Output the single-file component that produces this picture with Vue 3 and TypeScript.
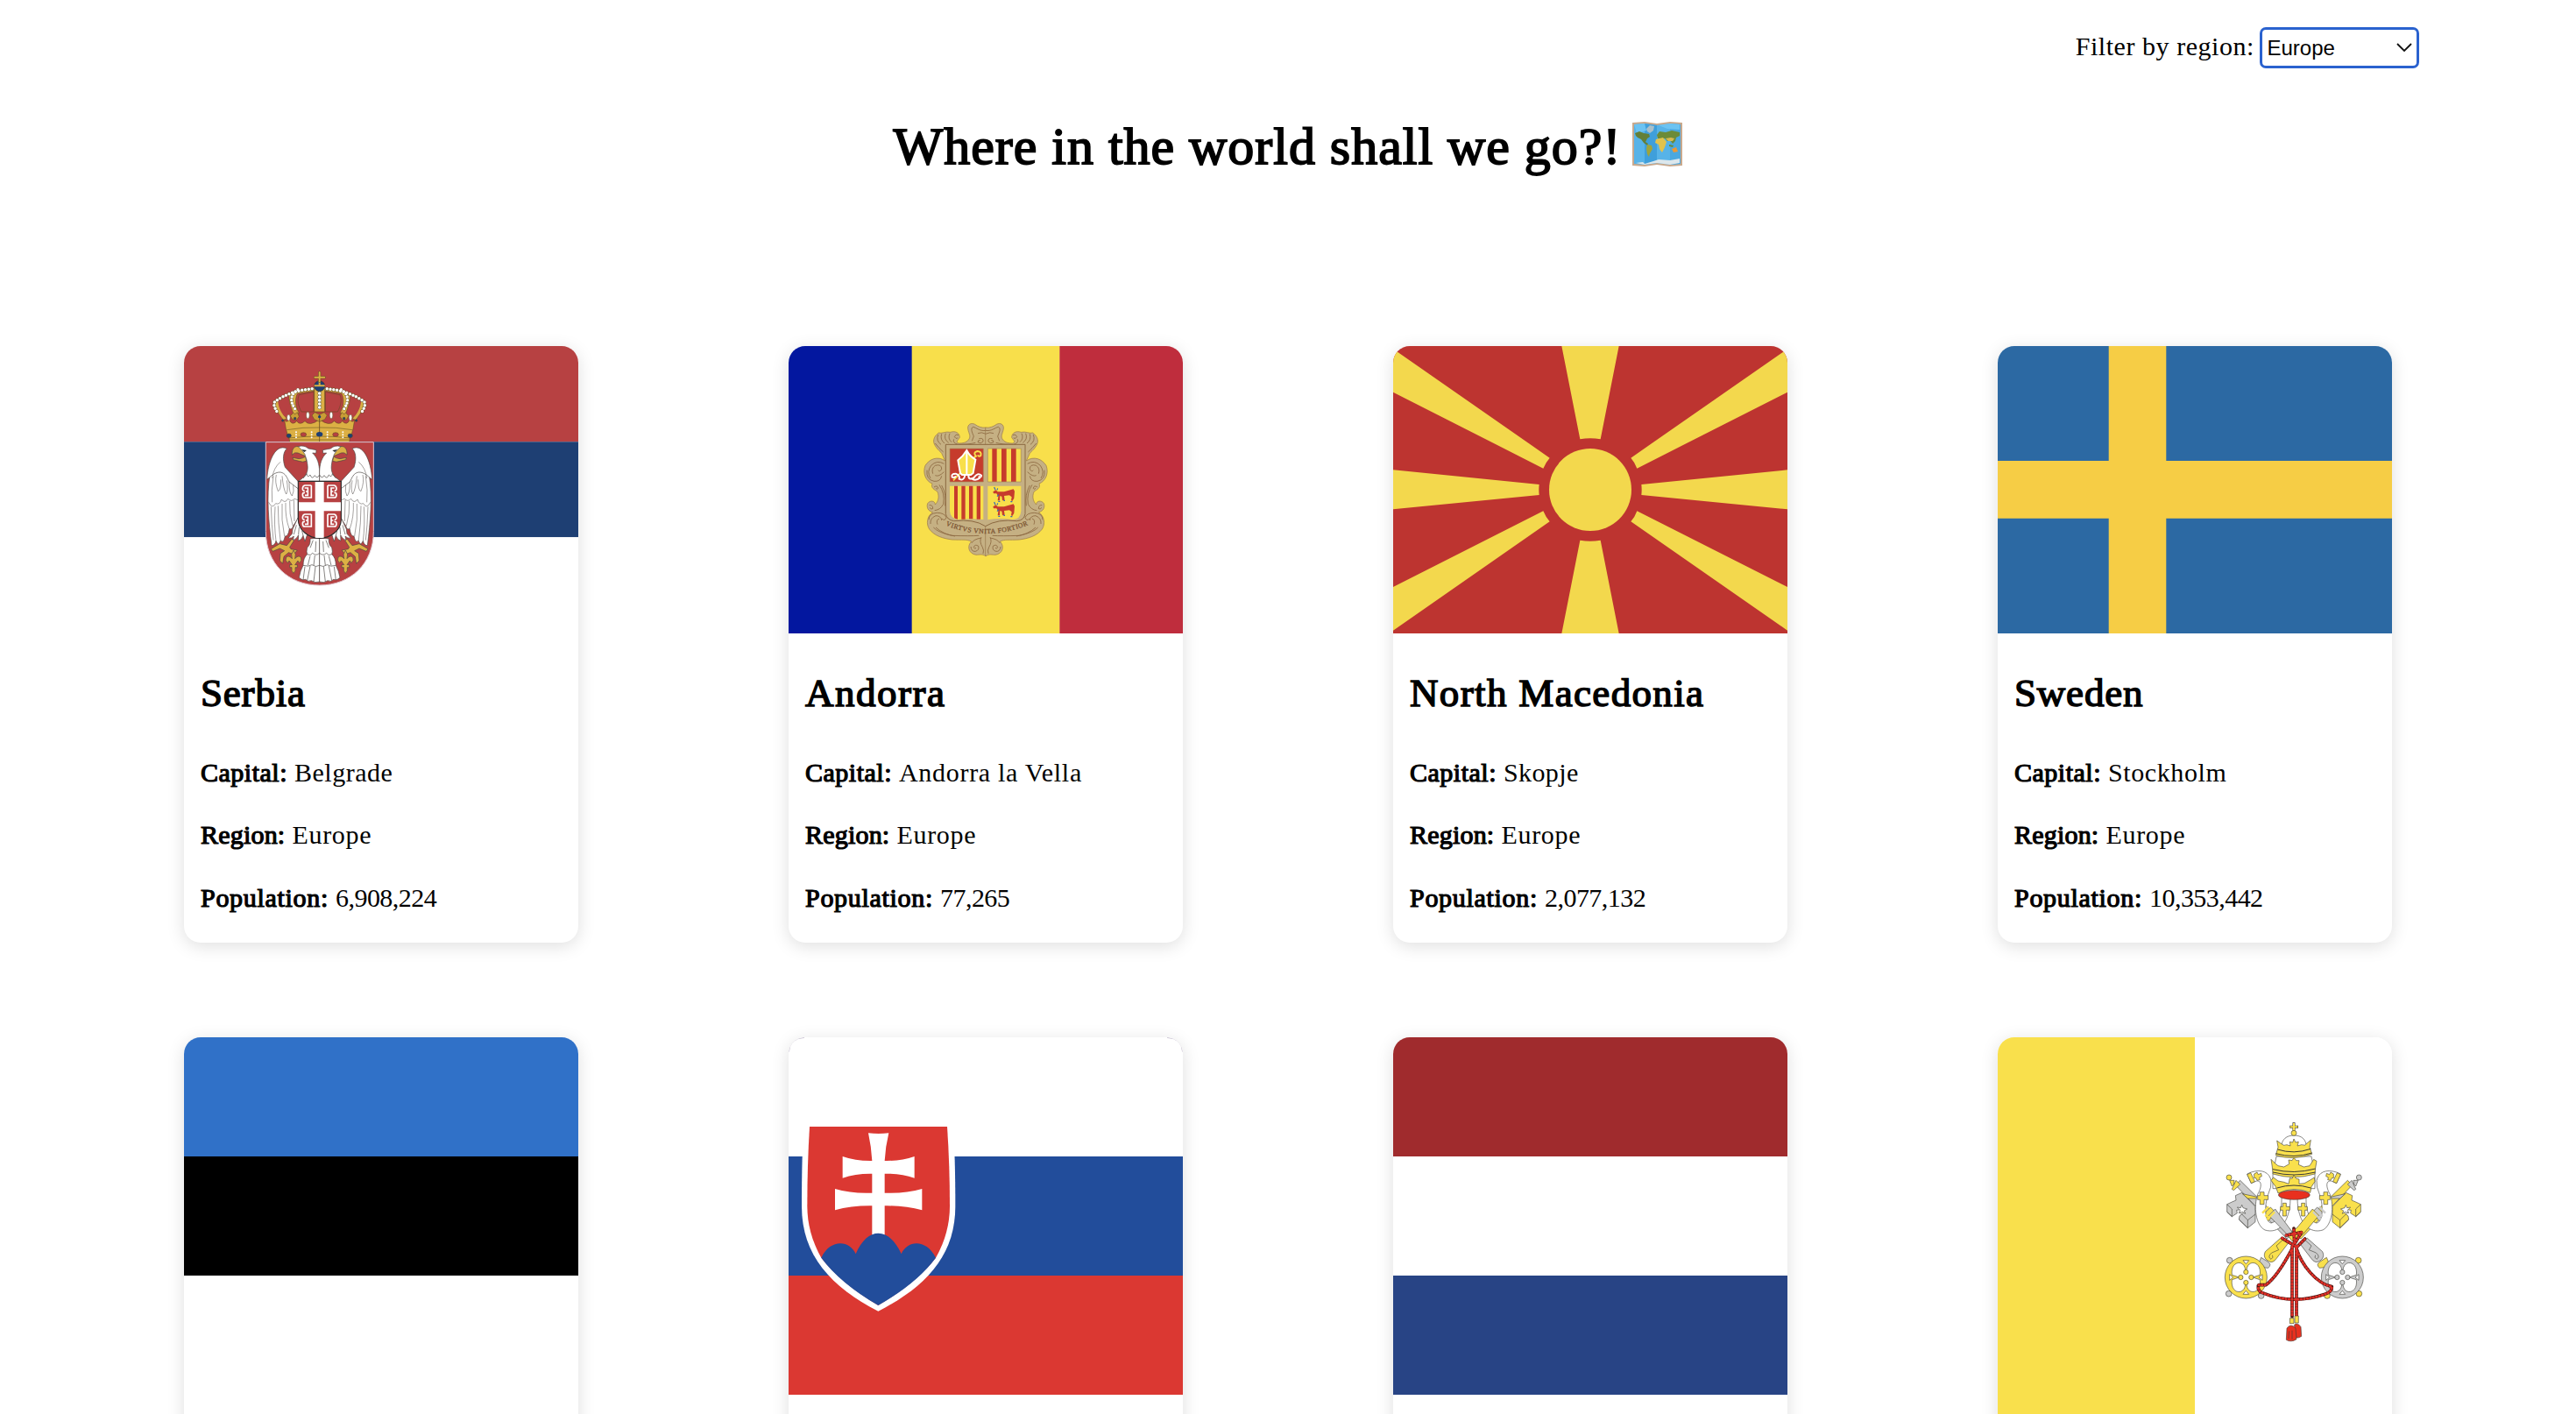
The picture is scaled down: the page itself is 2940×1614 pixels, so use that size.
<script setup lang="ts">
import { ref, computed } from 'vue'

interface Details {
  name: string
  capital: string
  population: number
  nameTracking: number
  capitalTracking: number
}

interface Country {
  id: string
  region: string
  flagHeight: number
  viewBox: string
  details?: Details
}

const regions: string[] = ['Africa', 'Americas', 'Asia', 'Europe', 'Oceania']
const region = ref<string>('Europe')

const wide = '60 45 1350 984'
const tall = '60 42 1350 1224'

const countries: Country[] = [
  { id: 'rs', region: 'Europe', flagHeight: 328, viewBox: wide, details: { name: 'Serbia', capital: 'Belgrade', population: 6908224, nameTracking: 0.8, capitalTracking: 0.5 } },
  { id: 'ad', region: 'Europe', flagHeight: 328, viewBox: wide, details: { name: 'Andorra', capital: 'Andorra la Vella', population: 77265, nameTracking: 1.5, capitalTracking: 0.7 } },
  { id: 'mk', region: 'Europe', flagHeight: 328, viewBox: wide, details: { name: 'North Macedonia', capital: 'Skopje', population: 2077132, nameTracking: 1.35, capitalTracking: 0.4 } },
  { id: 'se', region: 'Europe', flagHeight: 328, viewBox: '0 0 450 328', details: { name: 'Sweden', capital: 'Stockholm', population: 10353442, nameTracking: 0.8, capitalTracking: 0.6 } },
  { id: 'ee', region: 'Europe', flagHeight: 408, viewBox: tall },
  { id: 'sk', region: 'Europe', flagHeight: 408, viewBox: tall },
  { id: 'nl', region: 'Europe', flagHeight: 408, viewBox: tall },
  { id: 'va', region: 'Europe', flagHeight: 450, viewBox: '0 0 1350 1350' },
]

const visible = computed<Country[]>(() => countries.filter((c) => c.region === region.value))
const format = (n: number): string => n.toLocaleString('en-US')
</script>

<template>
  <main class="page">
    <div class="filter">
      <label class="filter-label" for="region">Filter by region:</label>
      <div class="select-wrap">
        <select id="region" v-model="region" class="select">
          <option v-for="r in regions" :key="r" :value="r">{{ r }}</option>
        </select>
        <svg class="chevron" viewBox="0 0 18 10"><path d="M1 1L9 9L17 1" fill="none" stroke="#111" stroke-width="1.8" /></svg>
      </div>
    </div>

    <h1 class="title">
      <span>Where in the world shall we go?!</span>
      <svg class="map" viewBox="0 0 57 51">
        <path d="M0 1L14 0L28 2L43 0L57 1V50L43 51L28 49L14 51L0 50Z" fill="#c9a98d" />
        <path d="M2 3L14 2L28 4L43 2L55 3V48L43 49L28 47L14 49L2 48Z" fill="#57b3e8" />
        <path d="M14 2L28 4V47L14 49Z" fill="#3f9fdb" />
        <path d="M43 2L55 3V48L43 49Z" fill="#4aa8e0" />
        <path d="M2 3L14 2L16 10L5 13ZM30 4L43 2L54 3V9L40 8Z" fill="#6cc3f2" />
        <path d="M3 13L8 11L13 13L19 14L20 17L17 19L15 23L18 25L17 27L13 24L10 20L6 18L4 16Z" fill="#637f38" />
        <path d="M16 8L20 4L25 5L24 10L20 13L17 11Z" fill="#a9c0ca" />
        <path d="M17 26L22 27L23 31L20 36L19 40L17 37L16 31Z" fill="#9fa43b" />
        <path d="M28 15L31 11L38 12L45 10L54 12V16L50 18L49 22L46 25L43 21L40 22L37 19L29 19Z" fill="#6c8b38" />
        <path d="M27 20L35 18L39 23L37 29L34 35L31 31L30 26L26 24Z" fill="#e3c34d" />
        <path d="M38 19L44 18L48 19L46 22L41 22Z" fill="#d7b951" />
        <path d="M45 31L50 29L52 34L47 35Z" fill="#ea9836" />
        <path d="M42 26L47 27L46 29L42 28Z" fill="#6c8b38" />
        <path d="M4 47L12 46L14 48L24 45L30 43L43 44L54 42V47L43 49L28 47L14 49Z" fill="#dce7ec" />
      </svg>
    </h1>

    <section class="grid">
      <article v-for="c in visible" :key="c.id" class="card">
        <svg class="flag" :viewBox="c.viewBox" :style="{ height: c.flagHeight + 'px' }" preserveAspectRatio="none">
          <template v-if="c.id === 'rs'">
            <path d="M60 45H1410V373H60Z" fill="#b74142" />
            <path d="M60 373H1410V700H60Z" fill="#1e3f73" />
            <path d="M60 700H1410V1029H60Z" fill="#fff" />
            <g transform="translate(270 90)">
              <defs>
                <g id="rs-crown" stroke="#5c4a20" stroke-width="1.6">
                  <path d="M98 145C100 165 112 185 130 208L142 204C126 185 118 165 124 148L134 128L112 134Z" fill="#d9ae45" />
                  <path d="M112 142L135 122V160L145 190L134 196C120 180 112 160 112 142Z" fill="#b74142" stroke="none" />
                  <path d="M150 122C148 148 160 172 166 190L184 184C172 165 168 140 178 118L238 108V98L180 106Z" fill="#d9ae45" />
                  <path d="M184 122C176 140 182 162 192 180H234V112Z" fill="#b74142" />
                  <path d="M139 238L134 208Q142 220 150 206Q160 230 176 212Q186 228 204 212Q220 232 254 206V284H152L150 268H146L142 248Z" fill="#dcb044" />
                  <path d="M142 242Q198 232 254 234M148 270Q200 264 254 264M152 276H254" fill="none" />
                  <path d="M154 194L164 184L170 188L178 182L184 196L176 208L162 207ZM228 192L238 182L254 190V214L236 206Z" fill="#c99d36" />
                  <ellipse cx="149" cy="262" rx="8" ry="7" fill="#1e3f73" />
                  <ellipse cx="199" cy="258" rx="10" ry="7" fill="#b74142" />
                  <ellipse cx="148" cy="200" rx="5.500" ry="10" fill="#fff" />
                  <ellipse cx="214" cy="192" rx="5.500" ry="11" fill="#fff" />
                  <circle cx="128" cy="210" r="4" fill="#1e3f73" />
                  <circle cx="170" cy="203" r="4" fill="#1e3f73" />
                  <g fill="none" stroke-linecap="round">
                    <path d="M240 101C185 102 130 122 99 148C96 160 104 172 113 188" stroke="#5c4a20" stroke-width="13" stroke-dasharray="0 11.500" />
                    <path d="M180 104C162 114 154 134 160 150Q164 162 174 176" stroke="#5c4a20" stroke-width="12" stroke-dasharray="0 11" />
                    <path d="M240 101C185 102 130 122 99 148C96 160 104 172 113 188" stroke="#fff" stroke-width="10.500" stroke-dasharray="0 11.500" />
                    <path d="M180 104C162 114 154 134 160 150Q164 162 174 176" stroke="#fff" stroke-width="10" stroke-dasharray="0 11" />
                    <path d="M174 250V270M227 250V272" stroke="#fff" stroke-width="6" stroke-dasharray="0 9" />
                  </g>
                </g>
                <g id="rs-eagle" stroke="#4a4543" stroke-width="2" stroke-linejoin="round">
                  <path d="M84 395C72 470 80 560 90 638Q101 638 105 622Q113 643 121 620Q130 634 136 606Q147 608 151 580Q160 586 164 570L181 545V430L150 395C130 378 105 378 84 395Z" fill="#fff" />
                  <path d="M142 306C105 288 78 345 74 412C85 405 98 386 120 387C138 390 142 405 150 420L184 446V422L136 370C126 340 130 318 142 306Z" fill="#fff" />
                  <path d="M120 352Q96 372 92 408M80 490Q92 515 104 494Q118 500 124 480Q136 496 146 478Q158 490 168 478L180 482M96 400Q88 450 92 490M106 396Q100 420 112 452Q122 450 122 412M126 400Q130 445 140 462Q148 450 142 415M150 420Q150 460 160 468Q168 455 164 430M88 505Q90 570 96 620M102 505Q98 570 105 622M112 502Q112 560 120 620M126 495Q122 550 134 606M138 492Q136 540 150 580M152 486Q150 530 162 570M166 482L168 555" fill="none" stroke-width="1.500" />
                  <path d="M180 543L162 582L160 598L147 612Q158 615 166 606L163 620Q176 616 182 602L181 622Q192 620 198 604L204 624L212 600Q192 584 180 543Z" fill="#fff" />
                  <path d="M175 568L166 600M184 576L182 600M194 588L198 604" fill="none" />
                  <path d="M160 615L142 638L118 632Q100 642 88 650L94 658L118 648L134 656L120 665L118 690L128 700L132 676L148 662L166 668L178 654L156 650L152 644L166 622Z" fill="#dcb044" />
                  <path d="M187 301C170 293 158 306 160 328Q168 317 180 321L208 333L206 312Z" fill="#dcb044" />
                  <path d="M162 337L184 341Q196 340 206 334L209 349Q196 354 184 349L164 344Z" fill="#dcb044" />
                  <path d="M181 299Q202 293 216 306L243 311L242 322L230 321C248 338 253 360 254 384V418H182L196 407C212 396 216 378 212 356C210 340 206 334 204 326L196 314Z" fill="#fff" />
                  <path d="M192 309L210 312L202 318Z" fill="#2b2b2b" stroke="none" />
                  <path d="M198 408Q206 398 210 392Q212 408 222 396Q228 414 238 398Q246 412 254 396" fill="none" />
                  <path d="M165 654Q154 668 160 683Q150 670 140 678Q134 690 146 698L150 690L160 704H152V713H159Q156 726 165 733Q174 726 171 713H178V704H170L180 690L184 698Q196 690 190 678Q180 670 170 683Q176 668 165 654Z" fill="#dcb044" />
                  <path d="M254 612L222 615Q224 635 212 645Q208 660 212 668Q198 680 198 706Q188 724 184 748Q196 760 206 754Q214 764 226 758Q238 768 254 762Z" fill="#fff" />
                  <path d="M212 668Q224 675 230 664Q242 675 254 664M198 706Q216 712 228 704Q242 714 254 706M232 620L222 646M242 624L240 660M222 674L214 706M238 672L234 706M204 710L198 756M222 708L212 758M240 710L234 762" fill="none" />
                </g>
                <path id="rs-c" d="M226 432H204Q196 434 196 444Q196 451 203 450M226 432V474H204Q196 474 196 464Q196 456 204 457M203 441H214V453H207M214 453V466H204" fill="none" stroke="#fff" stroke-width="5" />
              </defs>
              <use href="#rs-crown" />
              <use href="#rs-crown" transform="translate(508 0) scale(-1 1)" />
              <path d="M236 100H272V180H236Z" fill="#dcb044" stroke="#5c4a20" stroke-width="2" />
              <path d="M254 105V170" stroke="#4e5049" stroke-width="13" stroke-dasharray="0 12" stroke-linecap="round" />
              <path d="M254 105V170" stroke="#fff" stroke-width="11" stroke-dasharray="0 12" stroke-linecap="round" />
              <circle cx="254" cy="92" r="18" fill="#1e3f73" stroke="#33312f" stroke-width="2" />
              <path d="M236 91H272M254 74V91" stroke="#dcb044" stroke-width="6" />
              <path d="M254 45V76M238 62H271" stroke="#5c4a20" stroke-width="9" stroke-linecap="round" />
              <path d="M254 45V76M238 62H271" stroke="#dcb044" stroke-width="6" stroke-linecap="round" />
              <ellipse cx="254" cy="257" rx="11" ry="8" fill="#1e3f73" />
              <circle cx="254" cy="197" r="5" fill="#1e3f73" />
              <path d="M70 284H439V590C439 700 360 774 254 774C148 774 70 700 70 590Z" fill="#b74142" stroke="#dfc5ce" stroke-width="3" />
              <use href="#rs-eagle" />
              <use href="#rs-eagle" transform="translate(508 0) scale(-1 1)" />
              <path d="M181 418H328V548C328 586 292 613 254 613C218 613 181 586 181 548Z" fill="#b74142" stroke="#2b2b2b" stroke-width="3.500" />
              <path d="M239 420H269V490H327V520H269V611Q254 613 239 611V520H183V490H239Z" fill="#fff" />
              <use href="#rs-c" />
              <use href="#rs-c" y="99" />
              <use href="#rs-c" transform="translate(508 0) scale(-1 1)" />
              <use href="#rs-c" transform="translate(508 99) scale(-1 1)" />
            </g>
          </template>

          <template v-else-if="c.id === 'ad'">
            <path d="M60 45H483V1029H60Z" fill="#03179f" />
            <path d="M482 45H989V1029H482Z" fill="#f8df4b" />
            <path d="M988 45H1410V1029H988Z" fill="#bf2d3d" />
            <g transform="translate(480 270)">
              <defs>
                <g id="ad-frame">
                  <path d="M256 54C240 56 228 50 218 43C205 36 192 44 194 58C197 76 206 84 196 96C188 106 176 108 163 108C150 104 160 98 166 88C166 72 150 64 134 70C118 66 104 76 94 72C80 82 74 96 78 108C86 128 100 136 104 142L116 168C90 150 62 162 48 184C38 210 50 238 72 246C66 262 80 266 90 274C96 290 94 305 82 318C82 304 64 302 56 314C52 326 56 340 74 344C54 356 50 384 62 402C80 426 110 434 140 438C176 440 190 436 206 444C190 460 196 486 222 490C234 490 240 486 256 494Z" fill="#c5b083" stroke="#98794c" stroke-width="2" />
                  <path d="M256 64C236 68 222 54 212 52C202 56 208 70 214 84L208 100M256 76Q240 68 228 74M232 92Q248 88 246 102Q238 112 228 104Q228 96 236 98M220 106Q200 112 160 112Q140 106 146 94M160 90Q152 94 148 86Q152 74 162 80M92 78Q84 100 102 112M104 76Q98 96 114 108M118 74Q110 94 128 106M132 74Q124 92 138 104M82 108Q96 126 110 138M54 200Q50 232 78 238Q100 240 104 220M66 228Q52 206 68 184Q88 164 112 178M74 212Q68 194 82 184Q104 178 104 196Q98 208 92 200M82 218Q94 224 112 206M78 258Q90 250 92 262Q88 268 84 262M96 250Q116 280 110 316Q100 336 80 338M104 252Q122 284 116 322M62 320Q74 318 74 332Q66 336 64 328M60 370Q60 348 88 346Q114 346 120 362Q116 376 104 366M66 384Q64 364 84 356Q102 356 104 372M76 396Q92 414 140 424Q200 426 232 424M84 396Q110 420 150 426M90 386Q84 370 96 366M206 450Q214 436 240 432M204 462Q206 480 220 478Q234 474 230 460Q218 452 214 464Q218 472 222 466M240 430Q232 444 244 464Q250 474 246 486" fill="none" stroke="#8b6840" stroke-width="2.500" />
                </g>
                <path id="ad-arc" d="M116 388Q256 446 398 388" />
                <g id="ad-cow">
                  <path d="M290 268L296 274H318L350 265L354 272L352 296L346 306L342 304L344 292L336 286L318 288L320 302L312 304L310 290L304 288L303 304L296 304L298 290L292 280L282 280L280 274Z" fill="#c63b2c" />
                  <path d="M284 258L288 268M296 262L294 268M300 284L294 290M298 307H304M340 308H346M316 304H321" stroke="#3169b5" stroke-width="3.500" />
                </g>
              </defs>
              <use href="#ad-frame" />
              <use href="#ad-frame" transform="translate(510 0) scale(-1 1)" />
              <path d="M118 112H390V350Q386 372 362 374Q296 366 254 392Q214 366 146 374Q122 370 118 350Z" fill="#c5b083" stroke="#8b6840" stroke-width="3" />
              <path d="M132 126H247V240H132Z" fill="#c63b2c" />
              <path d="M262 126H376V240H262ZM132 254H247V369L206 367L160 369Q134 366 132 340ZM262 254H376V340Q374 370 346 369Q300 362 262 370Z" fill="#f8df4b" />
              <path d="M277 126H293V240H277ZM309 126H326V240H309ZM342 126H359V240H342ZM147 254H159V368Q150 366 147 363ZM172 254H185V368H172ZM198 254H211V367H198ZM224 254H237V368H224Z" fill="#c63b2c" />
              <path d="M144 235L166 212M206 164L222 152Q210 140 226 135Q242 136 238 150Q232 156 228 148" fill="none" stroke="#f8df4b" stroke-width="6" />
              <path d="M190 132Q200 152 220 164L212 210L204 216H174L168 210L160 166Q178 152 190 132Z" fill="#f8df4b" stroke="#fff" stroke-width="6" />
              <path d="M190 138V218M184 218Q180 238 164 230Q168 218 152 212Q136 212 140 224Q150 228 152 220M196 218Q196 236 214 226Q228 206 240 218Q240 226 230 222M208 230Q222 238 236 226" fill="none" stroke="#fff" stroke-width="6" />
              <use href="#ad-cow" />
              <use href="#ad-cow" y="51" />
              <path d="M132 126H247V240H132ZM262 126H376V240H262Z" fill="none" stroke="#a88b5a" stroke-width="2" />
              <text class="motto"><textPath href="#ad-arc" startOffset="2" textLength="290">VIRTVS VNITA FORTIOR</textPath></text>
            </g>
          </template>

          <template v-else-if="c.id === 'mk'">
            <path d="M60 45H1410V1029H60Z" fill="#bd3430" />
            <g fill="#f3d84d">
              <path d="M637 45H833L770 364Q735 357 700 364ZM637 1029H833L770 710Q735 716 700 710Z" />
              <path d="M60 469L560 519Q558 537 560 555L60 604ZM1410 469L910 519Q912 537 910 555L1410 604Z" />
              <path d="M60 45V203L574 464Q582 444 596 428L60 55ZM1410 45V203L895 464Q888 444 874 428L1410 55Z" />
              <path d="M60 870L574 610Q582 630 596 646L60 1019ZM1410 870L895 610Q888 630 874 646L1410 1019Z" />
              <circle cx="735" cy="537" r="141" />
            </g>
          </template>

          <template v-else-if="c.id === 'se'">
            <path d="M0 0H450V328H0Z" fill="#2c69a3" />
            <path d="M126.700 0H192.300V131H450V196.700H192.300V328H126.700V196.700H0V131H126.700Z" fill="#f6cd45" />
          </template>

          <template v-else-if="c.id === 'ee'">
            <path d="M60 42H1410V450H60Z" fill="#3071c8" />
            <path d="M60 450H1410V858H60Z" fill="#000" />
            <path d="M60 858H1410V1266H60Z" fill="#fff" />
          </template>

          <template v-else-if="c.id === 'sk'">
            <path d="M60 42H1410V450H60Z" fill="#fff" />
            <path d="M60 450H1410V858H60Z" fill="#224d9b" />
            <path d="M60 858H1410V1266H60Z" fill="#db3832" />
            <path d="M61 92Q64 46 114 43M1356 43Q1406 46 1409 92" fill="none" stroke="#c9c2d2" stroke-width="3" />
            <path d="M112 330H623Q631 450 631 620C631 790 530 896 367 980C206 896 105 790 105 620Q105 450 112 330Z" fill="#fff" />
            <path d="M132 348H603Q612 480 612 620Q612 712 564 797Q500 880 367 960Q240 884 172 797Q124 712 124 620Q124 480 132 348Z" fill="#db3832" />
            <path d="M333 370Q368 374 403 370Q392 415 389 465Q445 466 491 450V524Q445 508 389 509V575Q460 578 517 561V634Q460 618 389 619V730H346V619Q276 618 219 634V561Q276 578 346 575V509Q290 508 245 524V450Q290 466 346 465Q343 415 333 370Z" fill="#fff" />
            <path d="M172 797C204 730 270 738 290 784C330 690 404 690 446 784C466 738 530 730 564 797Q500 884 367 960Q236 884 172 797Z" fill="#224d9b" />
          </template>

          <template v-else-if="c.id === 'nl'">
            <path d="M60 42H1410V450H60Z" fill="#a02b2d" />
            <path d="M60 450H1410V858H60Z" fill="#fff" />
            <path d="M60 858H1410V1266H60Z" fill="#284485" />
          </template>

          <template v-else>
            <path d="M0 0H675V1350H0Z" fill="#f9e04c" />
            <path d="M675 0H1350V1350H675Z" fill="#fff" />
            <g transform="translate(690 228)" stroke="#3b3a36" stroke-width="1.800" stroke-linejoin="round">
              <defs>
                <g id="va-ribbon">
                  <path d="M246 262C240 235 215 222 178 234L164 240L178 272L196 264C218 262 212 290 200 310C186 350 192 415 225 432C270 446 310 410 312 326L282 318C284 370 266 405 246 408C224 404 222 350 236 310Q248 285 246 262Z" fill="#fff" />
                  <path d="M164 242L176 236L190 266L178 272ZM188 240L198 234L202 242L212 238L214 248L206 252L208 260L198 262L194 254L188 254Z" fill="#f9e04c" />
                  <path d="M208 302H222V314H236V328H222V344H208V328H200V314H208ZM286 340H298V352H310V364H298V384H286V364H278V352H286Z" fill="#f9e04c" />
                </g>
                <g id="va-wheel">
                  <circle r="72" />
                  <path d="M-48 -8C-54 -52 -14 -62 -4 -34Q-2 -24 0 -22Q2 -24 4 -34C14 -62 54 -52 48 -8Q34 -4 24 0Q34 4 48 8C54 52 14 62 4 34Q2 24 0 22Q-2 24 -4 34C-14 62 -54 52 -48 8Q-34 4 -24 0Q-34 -4 -48 -8Z" fill="#fff" />
                  <path d="M-10 -58H10L0 -46ZM-10 58H10L0 46ZM-56 -10V10L-44 0ZM56 -10V10L44 0Z" fill="#fff" />
                  <circle cy="-18" r="8" /><circle cy="18" r="8" /><circle cx="-18" r="8" /><circle cx="18" r="8" />
                </g>
                <g id="va-key">
                  <path d="M124 278L140 262L325 444L300 462Z" />
                  <path d="M146 304L124 314L126 330L112 336L95 344V370L112 386L130 374L128 364L142 362L152 372L138 384L136 396L166 425L192 404V352Z" />
                  <path d="M130 354L142 356L146 346L150 356L164 360L154 366L158 376L148 370L136 374L140 364Z" fill="#fff" />
                  <path d="M95 370L112 386V360L95 344M136 396L166 425V398L138 370M166 398L192 378" fill="none" />
                </g>
                <g id="va-shaft"><path d="M344 478L370 460L422 506Q430 522 418 534L408 540Q396 546 384 530Z" /><path d="M362 466L384 486L376 500L400 510Q416 524 402 532Q392 526 398 518" fill="none" /></g>
              </defs>
              <use href="#va-key" fill="#ccc" />
              <use href="#va-key" fill="#f9e04c" transform="translate(648 0) scale(-1 1)" />
              <path d="M112 292L126 262L140 276L118 296ZM104 262L120 262L118 276L112 282ZM148 308L194 318L200 324L166 324ZM218 380L244 354L262 372L234 404Z" fill="#f9e04c" />
              <path d="M536 292L522 262L508 276L530 296ZM544 262L528 262L530 276L536 282ZM500 308L454 318L448 324L482 324ZM430 380L404 354L386 372L414 404Z" fill="#ccc" />
              <circle cx="102" cy="252" r="9" fill="#f9e04c" /><circle cx="547" cy="252" r="9" fill="#ccc" />
              <use href="#va-ribbon" />
              <use href="#va-ribbon" transform="translate(648 0) scale(-1 1)" />
              <path d="M238 382L260 360L318 438L304 450Z" fill="#ccc" />
              <path d="M388 360L410 382L354 448L318 470L306 454L340 418Z" fill="#f9e04c" />
              <path d="M216 374L238 352M226 386L248 364M232 396L258 370" stroke="#f9e04c" stroke-width="7" />
              <path d="M432 374L410 352M422 386L400 364M416 396L390 370" stroke="#ccc" stroke-width="7" />
              <use href="#va-shaft" fill="#ccc" />
              <use href="#va-shaft" fill="#f9e04c" transform="translate(648 0) scale(-1 1)" />
              <path d="M212 526L234 540Q250 550 236 562L216 560L206 540Z" fill="#ccc" />
              <path d="M436 526L414 540Q398 550 412 562L432 560L442 540Z" fill="#f9e04c" />
              <g fill="#ccc"><circle cx="104" cy="536" r="10" /><circle cx="101" cy="650" r="10" /><circle cx="212" cy="657" r="10" /></g>
              <g fill="#f9e04c"><circle cx="545" cy="536" r="10" /><circle cx="547" cy="650" r="10" /><circle cx="438" cy="657" r="10" /></g>
              <use href="#va-wheel" transform="translate(160 594)" fill="#f9e04c" />
              <use href="#va-wheel" transform="translate(490 594)" fill="#ccc" />
              <path d="M280 150C282 120 300 108 324 108C350 108 366 120 368 150Z" fill="#fff" />
              <path d="M264 180H384L396 240V290H252V240Z" fill="#fff" />
              <path d="M324 64V92M310 79H339" stroke="#3b3a36" stroke-width="9" /><path d="M324 66V92M312 79H337" stroke="#f9e04c" stroke-width="6" />
              <circle cx="324" cy="100" r="9" fill="#f9e04c" />
              <g fill="#f9e04c">
                <path d="M270 148L266 126L280 136Q290 146 300 140L312 144L310 130L320 132L324 120L330 132L340 130L336 144L350 140Q362 146 370 134L382 124L378 148L386 172Q324 196 262 176Z" />
                <path d="M250 216L246 190L260 204L270 212L290 216L308 206L306 192L318 194L324 184L332 194L342 194L340 208L358 216L378 212L392 190L402 196L398 220L396 240Q324 262 252 240Z" />
                <path d="M262 284L246 262L254 252L270 264L290 268L306 274L310 254L318 256L324 244L332 256L342 258L342 274L360 272L378 262L394 252L396 266L384 284L380 304Q324 280 270 306Z" />
              </g>
              <path d="M268 156Q324 174 382 154M262 170Q324 188 386 168M252 224Q324 242 398 222M252 234Q324 252 398 234M266 288Q324 270 382 288" fill="none" stroke-width="3" />
              <ellipse cx="325" cy="312" rx="54" ry="16" fill="#e8301f" />
              <g fill="none" stroke-linecap="round">
                <path d="M204 620H228C262 596 300 530 318 496M318 490V728M333 490V728M333 496C350 550 400 615 454 626Q456 642 430 652Q320 690 214 646Q200 640 202 622M284 460L334 490L362 462M298 450L350 440L326 480L324 426" stroke="#4b1713" stroke-width="11" />
                <path d="M204 620H228C262 596 300 530 318 496M318 490V728M333 490V728M333 496C350 550 400 615 454 626Q456 642 430 652Q320 690 214 646Q200 640 202 622M284 460L334 490L362 462M298 450L350 440L326 480L324 426" stroke="#df2f27" stroke-width="9" stroke-dasharray="1 9.500" />
              </g>
              <path d="M310 752H324V734H310ZM327 750H340V726H327Z" fill="#f9e04c" />
              <path d="M326 756Q338 748 348 764L350 796Q340 804 328 800Z" fill="#e8301f" />
              <path d="M300 768Q314 750 330 768L333 806Q314 818 298 808Z" fill="#e8301f" />
              <path d="M308 778L306 804M318 776V806" fill="none" />
            </g>
          </template>
        </svg>
        <div v-if="c.details" class="info">
          <h2 class="name" :style="{ letterSpacing: c.details.nameTracking + 'px' }">{{ c.details.name }}</h2>
          <p class="row"><b>Capital:</b> <span :style="{ letterSpacing: c.details.capitalTracking + 'px' }">{{ c.details.capital }}</span></p>
          <p class="row"><b class="label-region">Region:</b> <span class="region">{{ c.region }}</span></p>
          <p class="row"><b class="label-population">Population:</b> <span class="number">{{ format(c.details.population) }}</span></p>
        </div>
      </article>
    </section>
  </main>
</template>

<style>
body {
  background: #fff;
  overflow: hidden;
}
</style>

<style scoped>
.page {
  box-sizing: border-box;
  height: 1614px;
  padding-top: 31px;
  overflow: hidden;
  color: #000;
  font-family: "Liberation Serif", "Times New Roman", serif;
}
.filter {
  display: flex;
  justify-content: flex-end;
  align-items: center;
  height: 47px;
  padding-right: 179px;
}
.filter-label {
  padding-bottom: 4px;
  margin-right: 6px;
  font-size: 30px;
  line-height: 36px;
  letter-spacing: 0.55px;
}
.select-wrap {
  position: relative;
  display: flex;
}
.select {
  box-sizing: border-box;
  width: 182px;
  height: 47px;
  padding: 0 0 0 5.5px;
  border: 3.5px solid #2a62cf;
  border-radius: 7px;
  outline: none;
  appearance: none;
  background: #fff;
  color: #000;
  font: 24px "Liberation Sans", Arial, sans-serif;
}
.chevron {
  position: absolute;
  top: 18px;
  right: 8px;
  width: 18px;
  height: 10px;
  pointer-events: none;
}
.title {
  display: flex;
  justify-content: center;
  align-items: center;
  margin: 54px 0 193px;
  font-size: 60px;
  font-weight: 400;
  line-height: 70px;
  letter-spacing: 0.97px;
  -webkit-text-stroke: 1.8px #000;
}
.map {
  width: 57px;
  height: 51px;
  margin: 0 0 6px 13px;
}
.grid {
  display: grid;
  grid-template-columns: repeat(4, 450px);
  grid-auto-rows: minmax(681px, auto);
  gap: 108px 240px;
  padding-left: 210px;
}
.card {
  overflow: hidden;
  border-radius: 19px;
  background: #fff;
  box-shadow: 0 4px 20px rgba(0, 0, 0, 0.13);
}
.flag {
  display: block;
  width: 450px;
}
.motto {
  fill: #7b5432;
  font: 23px "Liberation Serif", serif;
  stroke: #7b5432;
  stroke-width: 0.8px;
}
.info {
  padding: 41px 18px 33.6px 19px;
}
.name {
  margin: 0 0 45.6px;
  font-size: 45px;
  font-weight: 400;
  line-height: 54px;
  -webkit-text-stroke: 1.5px #000;
}
.row {
  margin: 0;
  font-size: 30px;
  line-height: 36px;
  letter-spacing: 0.5px;
}
.row + .row {
  margin-top: 35.6px;
}
.row b {
  font-weight: 400;
  -webkit-text-stroke: 1.2px #000;
}
.row .label-region {
  letter-spacing: 0.2px;
}
.row .label-population {
  letter-spacing: 0.7px;
}
.region {
  letter-spacing: 0.7px;
}
.number {
  letter-spacing: -0.55px;
}
</style>
